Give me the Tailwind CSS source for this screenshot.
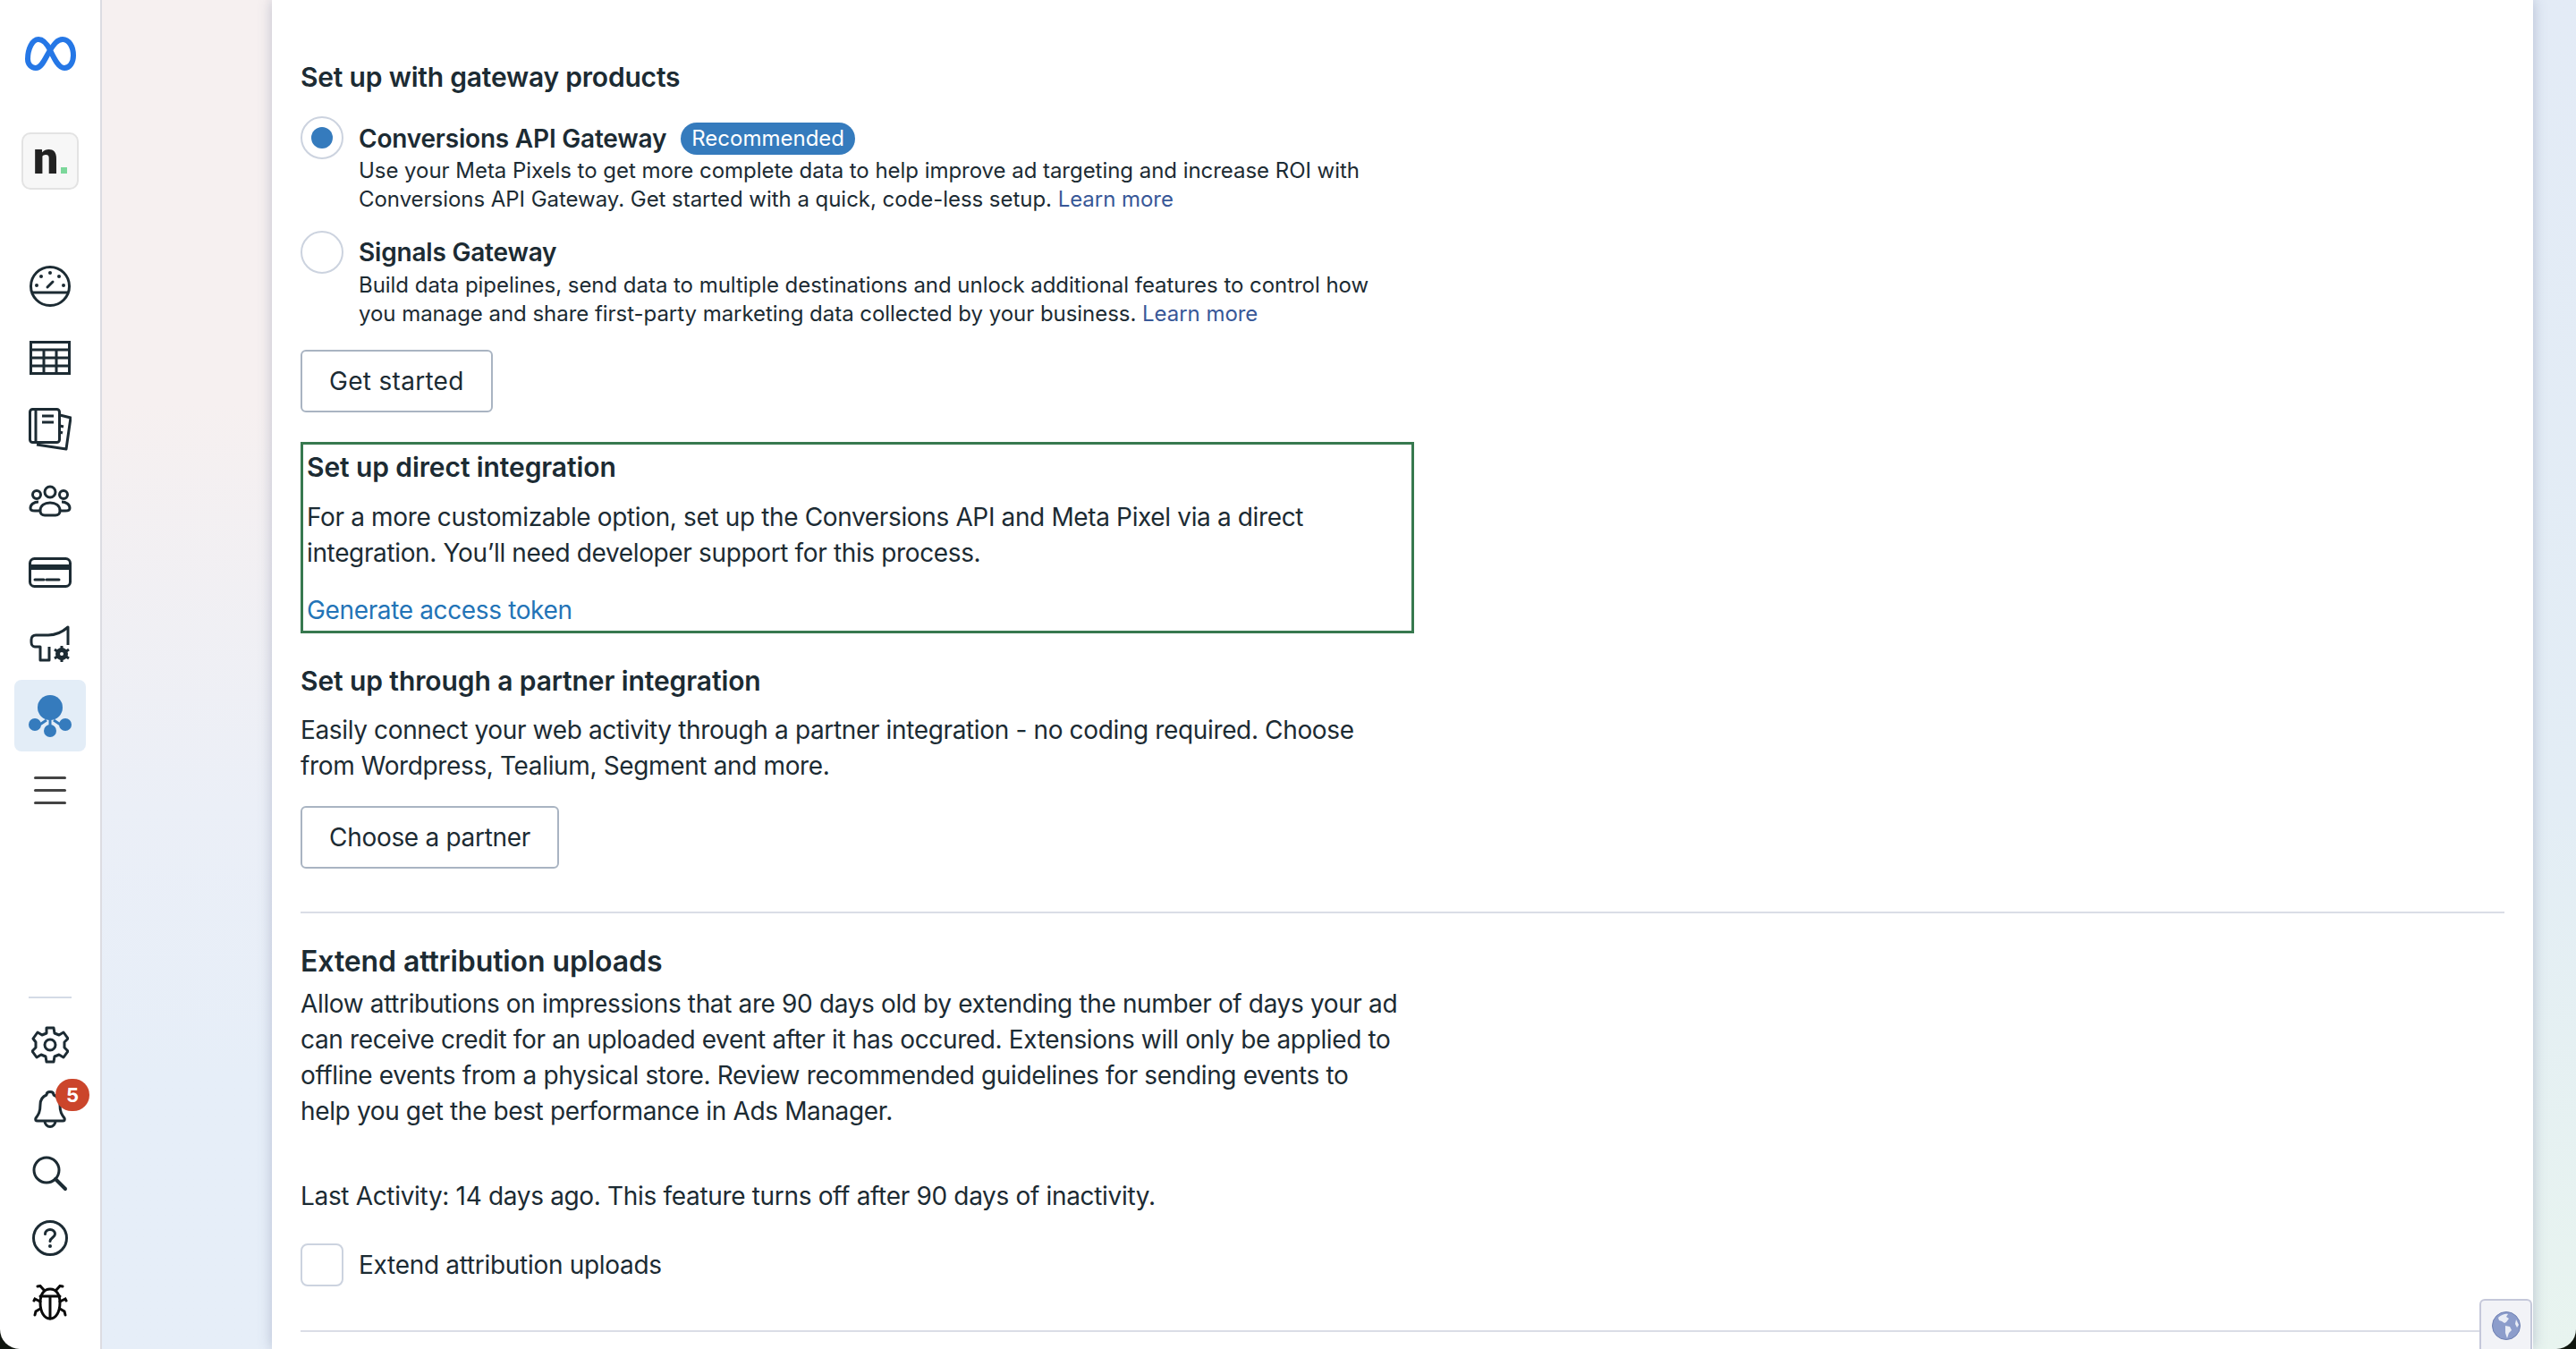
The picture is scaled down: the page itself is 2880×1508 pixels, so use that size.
<!DOCTYPE html>
<html lang="en">
<head>
    <meta charset="UTF-8">
    <title>Events Manager Settings</title>
    <script src="https://cdn.jsdelivr.net/npm/@tailwindcss/browser@4"></script>
</head>
<body class="bg-[#10160f]">
    <div class="flex h-[1508px] w-[2880px] overflow-hidden rounded-b-[22px] font-['Inter',sans-serif] text-[#1c2b33]">
        <!-- Left nav -->
        <nav class="flex w-[114px] shrink-0 flex-col items-center border-r-2 border-[#dcdce2] bg-white">
            <div class="mt-[20px] flex h-[80px] w-[80px] items-center justify-center">
                <svg width="58" height="40" viewBox="0 0 58 40" fill="none"><path d="M4 26c0-11 5-22 12-22 6 0 10 6 13 12 4 8 9 20 16 20 6 0 10-6 10-14C55 12 50 4 43 4c-6 0-10 6-14 12-5 8-9 20-16 20-5 0-9-4-9-10z" stroke="#2577e6" stroke-width="6"/></svg>
            </div>
            <div class="mt-[48px] flex h-[64px] w-[64px] items-start justify-center rounded-[10px] border-2 border-[#e3e3e3] bg-[#f7f7f7]">
                <span class="mt-[2px] font-['Roboto',sans-serif] text-[50px] leading-[50px] font-black text-[#222]">n</span><span class="mt-[37px] ml-[3px] h-[7px] w-[7px] bg-[#7bd79a]"></span>
            </div>
            <div class="mt-[68px] flex flex-col">
                <a class="flex h-[80px] w-[80px] items-center justify-center">
                    <svg width="48" height="48" viewBox="0 0 48 48" fill="none" stroke="#1c2b33" stroke-width="3"><circle cx="24" cy="24" r="21.5"/><path d="M3.5 31h41"/><path d="M21 25l6-6" stroke-linecap="round"/><g fill="#1c2b33" stroke="none"><circle cx="24" cy="9" r="2"/><circle cx="14" cy="13" r="2"/><circle cx="34" cy="13" r="2"/><circle cx="9" cy="23" r="2"/><circle cx="39" cy="23" r="2"/></g></svg>
                </a>
                <a class="flex h-[80px] w-[80px] items-center justify-center">
                    <svg width="46" height="38" viewBox="0 0 46 38" fill="none" stroke="#1c2b33" stroke-width="3"><rect x="1.5" y="1.5" width="43" height="35"/><path d="M1.5 10h43M1.5 19h43M1.5 28h43M16 10v27M30 10v27"/></svg>
                </a>
                <a class="flex h-[80px] w-[80px] items-center justify-center">
                    <svg width="48" height="48" viewBox="0 0 48 48" fill="none" stroke="#1c2b33" stroke-width="3" stroke-linejoin="round"><path d="M35 8l12 3-5 35-33-5"/><rect x="1.5" y="1.5" width="33" height="37" rx="3"/><path d="M8 2v36M15 9h13M15 16h13M35 20l4 1M35 27l3 1"/></svg>
                </a>
                <a class="flex h-[80px] w-[80px] items-center justify-center">
                    <svg width="48" height="36" viewBox="0 0 48 36" fill="none" stroke="#1c2b33" stroke-width="3"><circle cx="24" cy="8" r="6"/><circle cx="9" cy="11" r="4.5"/><circle cx="39" cy="11" r="4.5"/><path d="M13 29c0-6 5-9 11-9s11 3 11 9c0 3-2 5-5 5H18c-3 0-5-2-5-5z"/><path d="M13 29H7c-3 0-5-1-5-3 0-4 4-7 9-7M35 29h6c3 0 5-1 5-3 0-4-4-7-9-7"/></svg>
                </a>
                <a class="flex h-[80px] w-[80px] items-center justify-center">
                    <svg width="48" height="34" viewBox="0 0 48 34" fill="none" stroke="#1c2b33"><rect x="1.5" y="1.5" width="45" height="31" rx="5" stroke-width="3"/><path d="M2 11h44" stroke-width="6"/><path d="M7 25h10M20 25h14" stroke-width="3" stroke-linecap="round"/></svg>
                </a>
                <a class="flex h-[80px] w-[80px] items-center justify-center">
                    <svg width="46" height="42" viewBox="0 0 46 42" fill="none" stroke="#1c2b33" stroke-width="3" stroke-linejoin="round"><path d="M43 22V2c-8 7-15 9-22 9H7c-3 0-5 2-5 5v3c0 3 2 5 4 5h6v15h10V24"/><circle cx="36" cy="32" r="4.5" stroke-width="5"/><path d="M36 23v3M36 38v3M28 27l3 2M41 35l3 2M28 37l3-2M41 29l3-2" stroke-width="3"/></svg>
                </a>
                <a class="flex h-[80px] w-[80px] items-center justify-center rounded-[8px] bg-[#e3edf7]">
                    <svg width="48" height="48" viewBox="0 0 48 48" fill="#357bbd" stroke="#357bbd"><circle cx="24" cy="15" r="14" stroke="none"/><path d="M24 26v16M11 35l9-6M37 35l-9-6" stroke-width="3"/><g stroke="none"><circle cx="7" cy="34" r="7"/><circle cx="41" cy="34" r="7"/><circle cx="24" cy="41" r="7"/></g></svg>
                </a>
            </div>
            <div class="mt-[28px] flex w-[36px] flex-col gap-[11px]">
                <span class="h-[3px] rounded-full bg-[#444]"></span><span class="h-[3px] rounded-full bg-[#444]"></span><span class="h-[3px] rounded-full bg-[#444]"></span>
            </div>
            <div class="mt-auto h-[2px] w-[48px] bg-[#d4dbe6]"></div>
            <div class="mt-[16px] mb-[16px] flex flex-col">
                <a class="flex h-[72px] w-[80px] items-center justify-center">
                    <svg width="42" height="42" viewBox="0 0 42 42" fill="none" stroke="#1c2b33" stroke-width="3" stroke-linejoin="round"><circle cx="21" cy="21" r="6"/><path d="M17 2h8l1 6 5 2 5-3 5 7-4 4v6l4 4-5 7-5-3-5 2-1 6h-8l-1-6-5-2-5 3-5-7 4-4v-6L2 14l5-7 5 3 5-2z"/></svg>
                </a>
                <a class="relative flex h-[72px] w-[80px] items-center justify-center">
                    <svg width="38" height="42" viewBox="0 0 38 42" fill="none" stroke="#1c2b33" stroke-width="3" stroke-linejoin="round"><path d="M19 1.500c-2.500 0-4 1.500-4 3.500-5 2-7 6-7 11 0 8-2 11-5 15-1 2 0 3 2 3h28c2 0 3-1 2-3-3-4-5-7-5-15 0-5-2-9-7-11 0-2-1.500-3.500-4-3.500z"/><path d="M13 34c0 4 3 6.500 6 6.500s6-2.500 6-6.500"/></svg>
                    <span class="absolute top-[2px] left-[46px] flex h-[36px] w-[38px] items-center justify-center rounded-full bg-[#cb452b] text-[22px] font-bold text-white">5</span>
                </a>
                <a class="flex h-[72px] w-[80px] items-center justify-center">
                    <svg width="40" height="40" viewBox="0 0 40 40" fill="none" stroke="#1c2b33" stroke-width="3"><circle cx="16" cy="16" r="14"/><path d="M26 26l11 11" stroke-width="4" stroke-linecap="round"/></svg>
                </a>
                <a class="flex h-[72px] w-[80px] items-center justify-center">
                    <svg width="40" height="40" viewBox="0 0 40 40" fill="none" stroke="#1c2b33" stroke-width="3"><circle cx="20" cy="20" r="18.500"/><path d="M14.500 15.500c0-3 2.500-5 5.500-5s5.500 2 5.500 5c0 4-5.500 4-5.500 8" stroke-linecap="round"/><circle cx="20" cy="29" r="2" fill="#1c2b33" stroke="none"/></svg>
                </a>
                <a class="flex h-[72px] w-[80px] items-center justify-center">
                    <svg width="40" height="40" viewBox="0 0 40 40" fill="none" stroke="#0a0a0a" stroke-width="3" stroke-linecap="round"><path d="M20 5c-7 0-11 6-11 15 0 10 4 18 11 18s11-8 11-18C31 11 27 5 20 5z"/><path d="M20 13v25M9 13h22M13 6L9 1.500l-3 .5M27 6l4-4.500 3 .5M9 19l-6-3-1 2M31 19l6-3 1 2M9 27l-5 3-1 4M31 27l5 3 1 4"/></svg>
                </a>
            </div>
        </nav>

        <!-- Tinted gutter -->
        <div class="w-[190px] shrink-0 bg-gradient-to-b from-[#f6f0f0] from-30% via-[#ebeff7] via-60% to-[#e6eef8] to-80%"></div>

        <!-- Settings panel -->
        <main class="relative z-10 w-[2528px] shrink-0 bg-white px-[32px] pt-[66px] shadow-[0_0_14px_rgba(90,100,140,0.35)]">
            <section class="w-[1245px]">
                <h2 class="text-[30px] leading-[40px] font-semibold tracking-[-0.2px]">Set up with gateway products</h2>

                <div class="mt-[24px] flex gap-[17px]">
                    <span class="flex h-[48px] w-[48px] shrink-0 items-center justify-center rounded-full border-2 border-[#ccd3df]"><span class="h-[24px] w-[24px] rounded-full bg-[#357bbd]"></span></span>
                    <div class="w-[1180px] pt-[4px]">
                        <div class="flex h-[41px] items-center">
                            <span class="text-[28px] font-semibold tracking-[-0.2px]">Conversions API Gateway</span>
                            <span class="ml-[16px] flex h-[36px] items-center rounded-full bg-[#357bbd] px-[12px] text-[24px] text-white">Recommended</span>
                        </div>
                        <p class="text-[24px] leading-[32px] tracking-[-0.04px]">Use your Meta Pixels to get more complete data to help improve ad targeting and increase ROI with<br>Conversions API Gateway. Get started with a quick, code-less setup. <a class="text-[#385898]">Learn more</a></p>
                    </div>
                </div>

                <div class="mt-[19px] flex gap-[17px]">
                    <span class="h-[48px] w-[48px] shrink-0 rounded-full border-2 border-[#ccd3df]"></span>
                    <div class="w-[1180px] pt-[4px]">
                        <div class="flex h-[40px] items-center"><span class="text-[28px] font-semibold tracking-[-0.2px]">Signals Gateway</span></div>
                        <p class="mt-[1px] text-[24px] leading-[32px] tracking-[-0.04px]">Build data pipelines, send data to multiple destinations and unlock additional features to control how<br>you manage and share first-party marketing data collected by your business. <a class="text-[#385898]">Learn more</a></p>
                    </div>
                </div>

                <button class="mt-[24px] flex h-[70px] items-center rounded-[6px] border-2 border-[#a9b4c2] px-[30px] text-[28px] tracking-[0.3px]">Get started</button>
            </section>

            <section class="mt-[33px] h-[214px] w-[1245px] border-[3px] border-[#37794f] px-[4px]">
                <h2 class="mt-[5px] text-[30px] leading-[40px] font-semibold tracking-[-0.1px]">Set up direct integration</h2>
                <p class="mt-[16px] text-[28px] leading-[40px] tracking-[-0.36px]">For a more customizable option, set up the Conversions API and Meta Pixel via a direct<br>integration. You’ll need developer support for this process.</p>
                <a class="mt-[24px] block text-[28px] leading-[40px] tracking-[-0.36px] text-[#2374b7]">Generate access token</a>
            </section>

            <section class="mt-[33px] w-[1245px]">
                <h2 class="text-[30px] leading-[40px] font-semibold tracking-[-0.1px]">Set up through a partner integration</h2>
                <p class="mt-[15px] text-[28px] leading-[40px] tracking-[-0.36px]">Easily connect your web activity through a partner integration - no coding required. Choose<br>from Wordpress, Tealium, Segment and more.</p>
                <button class="mt-[25px] flex h-[70px] items-center rounded-[6px] border-2 border-[#a9b4c2] px-[30px] text-[28px] tracking-[-0.3px]">Choose a partner</button>
            </section>

            <hr class="mt-[48px] border-t-2 border-[#dadde6]">

            <section class="mt-[34px] w-[1245px]">
                <h2 class="text-[32px] leading-[40px] font-semibold tracking-[-0.1px]">Extend attribution uploads</h2>
                <p class="mt-[7px] text-[28px] leading-[40px] tracking-[-0.36px]">Allow attributions on impressions that are 90 days old by extending the number of days your ad<br>can receive credit for an uploaded event after it has occured. Extensions will only be applied to<br>offline events from a physical store. Review recommended guidelines for sending events to<br>help you get the best performance in Ads Manager.</p>
                <p class="mt-[55px] text-[28px] leading-[40px] tracking-[-0.33px]">Last Activity: 14 days ago. This feature turns off after 90 days of inactivity.</p>
                <label class="mt-[33px] flex items-center gap-[17px] text-[28px] tracking-[-0.3px]">
                    <span class="h-[48px] w-[48px] rounded-[8px] border-2 border-[#ccd3df]"></span>
                    Extend attribution uploads
                </label>
            </section>

            <hr class="mt-[49px] border-t-2 border-[#dadde6]">

            <div class="absolute top-[1452px] right-[1px] flex h-[56px] w-[59px] justify-center rounded-t-[6px] border-x-2 border-t-2 border-[#c5c8da] bg-[#f2f3f7] pt-[12px]">
                <svg width="32" height="32" viewBox="0 0 32 32"><circle cx="16" cy="16" r="15.500" fill="#8c9dcb" stroke="#6f80b2"/><path d="M7 7c3-3 8-5 11-4l-2 3 3 2-3 4-2 1-3-2-3-1zM15 16l5 1 2 4-3 3-2 6-2-6z" fill="#e9edf6"/><path d="M27 9l3 6-2 3-2-4z" fill="#e9edf6"/></svg>
            </div>
        </main>

        <!-- Right gutter -->
        <div class="flex-1 bg-gradient-to-b from-[#e3ebf6] via-[#e3edf5] via-60% to-[#e8f4ef]"></div>
    </div>
</body>
</html>
